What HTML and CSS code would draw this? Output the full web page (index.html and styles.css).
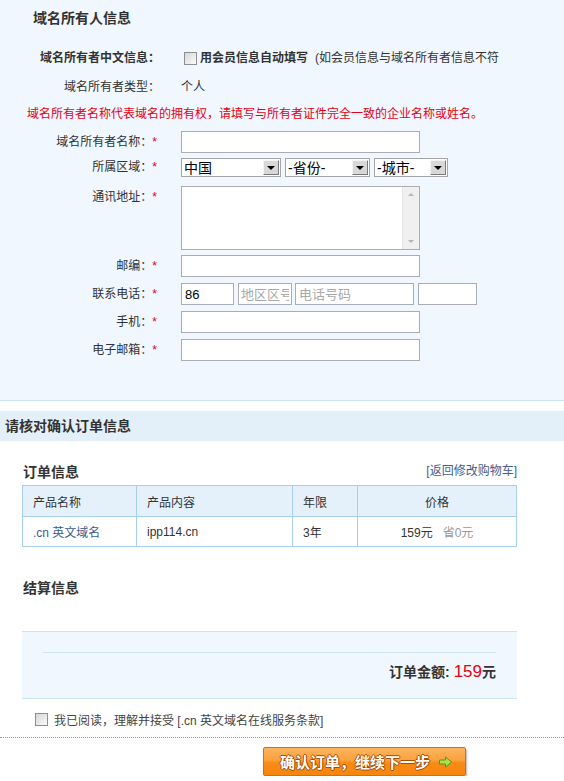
FILE: index.html
```html
<!DOCTYPE html>
<html lang="zh-CN">
<head>
  <meta charset="UTF-8">
  <meta name="viewport" content="width=device-width, initial-scale=1.0">
  <title>确认订单</title>
  <link rel="stylesheet" href="styles.css">
</head>
<body>

  <div class="owner">
    <h2 class="owner-title">域名所有人信息</h2>

    <div class="info-row info-first">
      <span class="info-label strong">域名所有者中文信息<i class="colon">：</i></span>
      <div class="info-value autofill">
        <input type="checkbox" class="chk">
        <b>用会员信息自动填写</b>
        <span class="hint">(如会员信息与域名所有者信息不符</span>
      </div>
    </div>

    <div class="info-row">
      <span class="info-label">域名所有者类型<i class="colon">：</i></span>
      <div class="info-value">个人</div>
    </div>

    <p class="notice">域名所有者名称代表域名的拥有权，请填写与所有者证件完全一致的企业名称或姓名。</p>

    <div class="form-row row-first">
      <label class="form-label">域名所有者名称<i class="colon">：</i><em>*</em></label>
      <input type="text" class="txt">
    </div>

    <div class="form-row row-select">
      <label class="form-label">所属区域<i class="colon">：</i><em>*</em></label>
      <div class="selects">
        <div class="sel sel-country">
          <select><option>中国</option></select>
          <span class="sel-btn"></span>
        </div>
        <div class="sel sel-province">
          <select><option>-省份-</option></select>
          <span class="sel-btn"></span>
        </div>
        <div class="sel sel-city">
          <select><option>-城市-</option></select>
          <span class="sel-btn"></span>
        </div>
      </div>
    </div>

    <div class="form-row row-area">
      <label class="form-label">通讯地址<i class="colon">：</i><em>*</em></label>
      <div class="area">
        <textarea></textarea>
        <div class="area-bar">
          <span class="up"></span>
          <span class="down"></span>
        </div>
      </div>
    </div>

    <div class="form-row row-zip">
      <label class="form-label">邮编<i class="colon">：</i><em>*</em></label>
      <input type="text" class="txt">
    </div>

    <div class="form-row">
      <label class="form-label">联系电话<i class="colon">：</i><em>*</em></label>
      <div class="phone">
        <input type="text" class="txt ph-country" value="86">
        <input type="text" class="txt ph-area" placeholder="地区区号">
        <input type="text" class="txt ph-number" placeholder="电话号码">
        <input type="text" class="txt ph-ext">
      </div>
    </div>

    <div class="form-row">
      <label class="form-label">手机<i class="colon">：</i><em>*</em></label>
      <input type="text" class="txt">
    </div>

    <div class="form-row">
      <label class="form-label">电子邮箱<i class="colon">：</i><em>*</em></label>
      <input type="text" class="txt">
    </div>
  </div>

  <h3 class="confirm-bar">请核对确认订单信息</h3>

  <div class="order">
    <div class="order-head">
      <h4>订单信息</h4>
      <a href="#" class="back-link">[返回修改购物车]</a>
    </div>

    <table class="order-table">
      <tr>
        <th class="col-name">产品名称</th>
        <th class="col-content">产品内容</th>
        <th class="col-year">年限</th>
        <th class="col-price">价格</th>
      </tr>
      <tr>
        <td class="product">.cn 英文域名</td>
        <td>ipp114.cn</td>
        <td>3年</td>
        <td class="price">159元<span class="save">省0元</span></td>
      </tr>
    </table>

    <h4 class="settle-title">结算信息</h4>

    <div class="settle">
      <div class="settle-inner">
        订单金额: <span class="amount">159</span>元
      </div>
    </div>

    <div class="agree">
      <input type="checkbox" class="chk">
      <span>我已阅读，理解并接受 [.cn 英文域名在线服务条款]</span>
    </div>
  </div>

  <div class="actions">
    <button type="button" class="submit">
      确认订单，继续下一步
      <svg width="15" height="12" viewBox="0 0 15 12">
        <polygon points="1.5,4 7.5,4 7.5,1 13.5,6 7.5,11 7.5,8 1.5,8" fill="#a6e34f" stroke="#4f9a16" stroke-width="1"/>
      </svg>
    </button>
  </div>

</body>
</html>
```

FILE: styles.css
```css
/* page */
body {
  margin: 0;
  font: 12px "Liberation Sans", "Noto Sans CJK SC", sans-serif;
  color: #333;
  background: #fff;
}

input, select, textarea, button {
  font-family: "Liberation Sans", "Noto Sans CJK SC", sans-serif;
}

/* owner block */
.owner {
  background: #f0f7fe;
  border-bottom: 1px solid #c9e2f5;
  padding: 9px 0 39px;
}

.owner-title {
  margin: 0 0 0 33px;
  font-size: 14px;
  line-height: 18px;
}

.colon {
  font-style: normal;
  font-family: "Noto Sans CJK TC", sans-serif;
  line-height: 1;
}

.info-row {
  display: grid;
  grid-template-columns: 160px 1fr;
  column-gap: 21px;
  line-height: 20px;
  margin-top: 9px;
}

.info-first {
  margin-top: 21px;
}

.info-label {
  text-align: right;
}

.info-label.strong {
  font-weight: bold;
}

.autofill {
  display: flex;
  align-items: center;
  white-space: nowrap;
}

.autofill .chk {
  margin: 0 3px 0 3px;
}

.hint {
  margin-left: 7px;
}

.chk {
  appearance: none;
  -webkit-appearance: none;
  width: 13px;
  height: 13px;
  margin: 0;
  border: 1px solid #8e8f8f;
  background: linear-gradient(135deg, #d6d6d6, #fbfbfb);
  flex: none;
}

.notice {
  margin: 7px 0 0 27px;
  color: #e60012;
  line-height: 20px;
}

/* form rows */
.form-row {
  display: grid;
  grid-template-columns: 157px auto;
  column-gap: 24px;
  justify-content: start;
  align-items: start;
  margin-top: 6px;
}

.row-first {
  margin-top: 7px;
}

.row-select {
  margin-top: 5px;
}

.row-area {
  margin-top: 9px;
}

.row-zip {
  margin-top: 5px;
}

.form-label {
  text-align: right;
  line-height: 22px;
  height: 22px;
}

.form-label em {
  font-style: normal;
  color: #e60012;
}

.row-select .form-label {
  line-height: 19px;
  height: 19px;
}

.txt {
  box-sizing: border-box;
  width: 239px;
  height: 22px;
  margin: 0;
  padding: 0 3px;
  border: 1px solid #abadb3;
  background: #fff;
  font-size: 13px;
  color: #000;
}

.txt::placeholder {
  color: #a8a8a8;
}

/* selects */
.selects {
  display: flex;
  gap: 4px;
}

.sel {
  box-sizing: border-box;
  display: flex;
  align-items: center;
  height: 19px;
  border: 1px solid #a5a5a5;
  background: #fff;
}

.sel-country {
  width: 100px;
}

.sel-province {
  width: 85px;
}

.sel-city {
  width: 74px;
}

.sel select {
  appearance: none;
  -webkit-appearance: none;
  flex: 1;
  min-width: 0;
  height: 17px;
  border: none;
  background: transparent;
  padding: 0 2px;
  font-size: 14px;
  color: #000;
}

.sel-btn {
  box-sizing: border-box;
  width: 16px;
  height: 15px;
  margin-right: 1px;
  border: 1px solid;
  border-color: #f4f4f4 #7a7a7a #7a7a7a #f4f4f4;
  background: #d8d8d8;
  display: flex;
  align-items: center;
  justify-content: center;
}

.sel-btn::after {
  content: "";
  border-left: 4px solid transparent;
  border-right: 4px solid transparent;
  border-top: 4px solid #000;
}

/* textarea */
.area {
  box-sizing: border-box;
  display: flex;
  width: 239px;
  height: 64px;
  border: 1px solid #abadb3;
  background: #fff;
}

.area textarea {
  flex: 1;
  border: none;
  resize: none;
  outline: none;
  padding: 2px;
  background: transparent;
}

.area-bar {
  width: 16px;
  background: #f0f0f0;
  border-left: 1px solid #e4e4e4;
  display: flex;
  flex-direction: column;
  justify-content: space-between;
  align-items: center;
  padding: 6px 0;
}

.area-bar .up {
  border-left: 3px solid transparent;
  border-right: 3px solid transparent;
  border-bottom: 3px solid #b5b5b5;
}

.area-bar .down {
  border-left: 3px solid transparent;
  border-right: 3px solid transparent;
  border-top: 3px solid #b5b5b5;
}

/* phone */
.phone {
  display: flex;
}

.phone .ph-country {
  width: 53px;
}

.phone .ph-area {
  width: 54px;
  margin-left: 4px;
  padding: 0 2px;
  overflow: hidden;
}

.phone .ph-number {
  width: 119px;
  margin-left: 3px;
}

.phone .ph-ext {
  width: 59px;
  margin-left: 4px;
}

/* confirm bar */
.confirm-bar {
  margin: 10px 0 0;
  background: #e3f0fa;
  height: 30px;
  line-height: 30px;
  padding-left: 5px;
  font-size: 14px;
}

/* order */
.order {
  padding: 0 47px 0 22px;
}

.order-head {
  display: flex;
  justify-content: space-between;
  align-items: center;
  margin-top: 21px;
  height: 20px;
}

.order-head h4,
.settle-title {
  margin: 0 0 0 1px;
  font-size: 14px;
  line-height: 20px;
}

.back-link {
  color: #44608c;
  text-decoration: none;
  margin-top: -6px;
}

.order-table {
  width: 495px;
  margin-top: 3px;
  border-collapse: collapse;
  table-layout: fixed;
}

.order-table th,
.order-table td {
  border: 1px solid #a6cff1;
  padding: 0 0 0 10px;
  text-align: left;
  font-weight: normal;
}

.order-table th {
  background: #e4f1fb;
  height: 30px;
}

.order-table td {
  height: 29px;
  background: #fff;
}

.col-name {
  width: 103px;
}

.col-content {
  width: 145px;
}

.col-year {
  width: 54px;
}

.order-table .col-price,
.order-table .price {
  text-align: center;
  padding-left: 0;
}

.product {
  color: #3b5b8c;
}

.save {
  color: #999;
  margin-left: 10px;
}

.settle-title {
  margin-top: 31px;
}

.settle {
  margin-top: 33px;
  background: #f0f7fe;
  border-top: 1px solid #cde4f5;
  border-bottom: 1px solid #cde4f5;
  padding: 20px 21px 14px;
}

.settle-inner {
  border-top: 1px solid #cde4f5;
  padding-top: 7px;
  text-align: right;
  font-size: 14px;
  font-weight: bold;
  line-height: 24px;
}

.amount {
  color: #e60012;
  font-size: 17px;
  font-weight: normal;
}

.agree {
  display: flex;
  align-items: center;
  gap: 6px;
  margin: 10px 0 8px;
  padding-left: 13px;
  height: 20px;
  color: #444;
}

/* actions */
.actions {
  border-top: 1px dotted #999;
  padding: 9px 0 0 263px;
}

.submit {
  width: 203px;
  height: 29px;
  display: flex;
  align-items: center;
  justify-content: center;
  gap: 8px;
  padding: 0 0 0 4px;
  border: 1px solid #dc6c05;
  border-radius: 2px;
  background: linear-gradient(#fdb460 0%, #fba23d 45%, #f98a14 55%, #f7860f 100%);
  box-shadow: 1px 2px 2px rgba(0, 0, 0, 0.3);
  color: #fff;
  font-size: 15px;
  font-weight: bold;
  text-shadow: 1px 0 #a54c00, -1px 0 #a54c00, 0 1px #a54c00, 0 -1px #a54c00;
  cursor: pointer;
}
```
